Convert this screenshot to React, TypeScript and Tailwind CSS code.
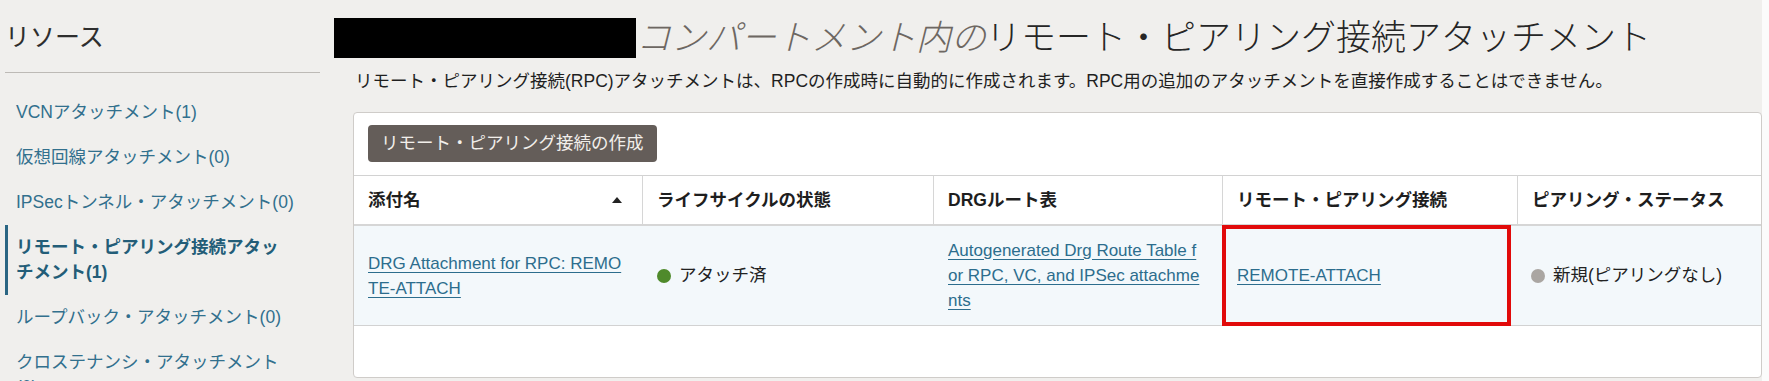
const navItems = [
  { lines: ["VCNアタッチメント(1)"] },
  { lines: ["仮想回線アタッチメント(0)"] },
  { lines: ["IPSecトンネル・アタッチメント(0)"] },
  { lines: ["リモート・ピアリング接続アタッ", "チメント(1)"], active: true },
  { lines: ["ループバック・アタッチメント(0)"] },
  { lines: ["クロステナンシ・アタッチメント", "(0)"] },
];

const SortUp = () => (
  <svg width="10" height="6" viewBox="0 0 10 6">
    <path d="M5 0L10 6H0z" fill="#222" />
  </svg>
);

const Sidebar = () => (
  <div className="w-[320px] shrink-0 pl-[5px] pt-[14px]">
    <div className="h-[48px] flex items-center text-[25px] text-[#2e2e2e]">リソース</div>
    <div className="mt-[10px] border-b border-[#bdbab6]" />
    <ul className="mt-[17px]">
      {navItems.map((item, i) => (
        <li
          key={i}
          className={
            item.active
              ? "border-l-[3px] border-[#2a6583] pl-[8px] py-[10px] leading-[25px] text-[17.5px] font-bold text-[#235d78]"
              : "border-l-[3px] border-transparent pl-[8px] py-[10px] leading-[25px] text-[17.5px] text-[#32708d]"
          }
        >
          {item.lines.map((l, j) => (
            <div key={j} className="whitespace-nowrap">{l}</div>
          ))}
        </li>
      ))}
    </ul>
  </div>
);

const linkCls = "text-[#2c6d8d] underline underline-offset-[3px] decoration-[#2c6d8d] text-[17px] whitespace-nowrap";

const Table = () => (
  <div className="grid grid-cols-[288px_291px_289px_295px_1fr]">
    {/* header */}
    <div className="h-[51px] border-t border-b-2 border-t-[#d2d2d2] border-b-[#d6d6d6] pl-[14px] pr-[20px] flex items-center justify-between text-[17.5px] font-bold text-[#1e1e1e]">
      <span>添付名</span>
      <SortUp />
    </div>
    <div className="h-[51px] border-t border-b-2 border-l border-t-[#d2d2d2] border-b-[#d6d6d6] border-l-[#d6d6d6] pl-[14px] flex items-center text-[17.5px] font-bold text-[#1e1e1e]">
      ライフサイクルの状態
    </div>
    <div className="h-[51px] border-t border-b-2 border-l border-t-[#d2d2d2] border-b-[#d6d6d6] border-l-[#d6d6d6] pl-[14px] flex items-center text-[17.5px] font-bold text-[#1e1e1e]">
      DRGルート表
    </div>
    <div className="h-[51px] border-t border-b-2 border-l border-t-[#d2d2d2] border-b-[#d6d6d6] border-l-[#d6d6d6] pl-[14px] flex items-center text-[17.5px] font-bold text-[#1e1e1e]">
      リモート・ピアリング接続
    </div>
    <div className="h-[51px] border-t border-b-2 border-l border-t-[#d2d2d2] border-b-[#d6d6d6] border-l-[#d6d6d6] pl-[14px] flex items-center text-[17.5px] font-bold text-[#1e1e1e]">
      ピアリング・ステータス
    </div>

    {/* row */}
    <div className="h-[100px] bg-[#f3f8fb] border-b border-[#d2d2d2] pl-[14px] flex items-center leading-[25px]">
      <a className={linkCls}>
        DRG Attachment for RPC: REMO
        <br />
        TE-ATTACH
      </a>
    </div>
    <div className="h-[100px] bg-[#f3f8fb] border-b border-[#d2d2d2] pl-[15px] flex items-center gap-[8px] text-[17.5px] text-[#222]">
      <span className="w-[14px] h-[14px] rounded-full bg-[#4f8a2b]" />
      <span>アタッチ済</span>
    </div>
    <div className="h-[100px] bg-[#f3f8fb] border-b border-[#d2d2d2] pl-[15px] flex items-center leading-[25px]">
      <a className={linkCls}>
        Autogenerated Drg Route Table f
        <br />
        or RPC, VC, and IPSec attachme
        <br />
        nts
      </a>
    </div>
    <div className="relative h-[100px] bg-[#f3f8fb] border-b border-[#d2d2d2] pl-[15px] flex items-center leading-[25px]">
      <a className={linkCls}>REMOTE-ATTACH</a>
      <div className="absolute left-0 right-[6px] top-[-1px] bottom-[-1px] border-4 border-[#e10a0a]" />
    </div>
    <div className="h-[100px] bg-[#f3f8fb] border-b border-[#d2d2d2] pl-[14px] flex items-center gap-[8px] text-[17.5px] text-[#222]">
      <span className="w-[14px] h-[14px] rounded-full bg-[#aaa6a2]" />
      <span>新規(ピアリングなし)</span>
    </div>
  </div>
);

export default function App() {
  return (
    <div className="w-[1769px] h-[381px] overflow-hidden flex bg-[#f0efed] font-['Liberation_Sans','Noto_Sans_CJK_JP',sans-serif]">
      <Sidebar />
      <div className="flex-1 min-w-0 pl-[14px] pt-[14px]">
        <div className="h-[48px] flex items-center text-[35px] font-light whitespace-nowrap">
          <div className="w-[302px] h-[40px] bg-black shrink-0" />
          <span className="italic text-[#6d6762]">コンパートメント内の</span>
          <span className="text-[#262626]">リモート・ピアリング接続アタッチメント</span>
        </div>
        <div className="mt-[6px] ml-[21px] leading-[26px] text-[17.5px] text-[#1f1f1f] whitespace-nowrap">
          リモート・ピアリング接続(RPC)アタッチメントは、RPCの作成時に自動的に作成されます。RPC用の追加のアタッチメントを直接作成することはできません。
        </div>
        <div className="mt-[18px] ml-[19px] h-[266px] bg-white border border-[#cfccc9] rounded-[4px] overflow-hidden">
          <div className="pl-[14px] pt-[12px] pb-[13px]">
            <button
              type="button"
              className="h-[37px] px-[13px] rounded-[4px] bg-[#645d59] text-[#f2efeb] text-[17.5px] whitespace-nowrap"
            >
              リモート・ピアリング接続の作成
            </button>
          </div>
          <Table />
        </div>
      </div>
      <div className="w-[7px] shrink-0 bg-[#fbfbfb]" />
    </div>
  );
}
